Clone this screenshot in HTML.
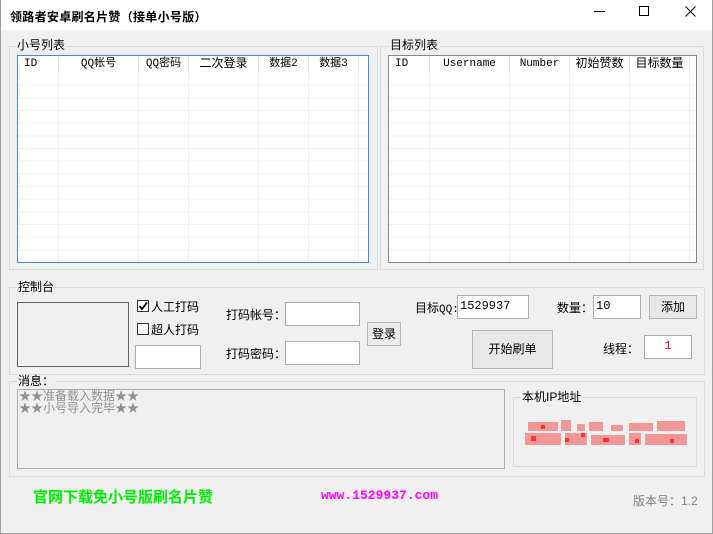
<!DOCTYPE html>
<html><head><meta charset="utf-8"><style>
*{margin:0;padding:0;box-sizing:border-box}
body{width:713px;height:534px;overflow:hidden;background:#f0f0f0;font-family:"Liberation Sans","Noto Sans CJK SC","WenQuanYi Zen Hei",sans-serif;font-size:12px;color:#000;position:relative}
.a{position:absolute;white-space:nowrap}
.win{left:0;top:0;width:713px;height:534px;border:1px solid #a0a0a0;border-top:none}
.title{left:0;top:0;width:713px;height:30px;background:#fff}
.grp{border:1px solid #dcdcdc}
.lbl{background:#f0f0f0;padding:0 1px;line-height:13px;font-size:12px}
.lv{background:#fff;border:1px solid #828790;overflow:hidden}
.hd{position:absolute;top:0;height:17px;border-right:1px solid #e5e5e5;font-family:"Liberation Mono","Noto Sans CJK SC",monospace;font-size:11px;line-height:17px;text-align:center;background:#fff}
.rows{position:absolute;left:0;top:17px;right:0;bottom:0;background:repeating-linear-gradient(to bottom,#fff 0,#fff 11.67px,#f0f0f0 11.67px,#f0f0f0 12.67px)}
.vl{position:absolute;top:0;bottom:0;width:1px;background:#f0f0f0}
.inp{background:#fff;border:1px solid #acacac;font-size:12px;line-height:20px;padding-left:2px;font-family:"Liberation Mono",monospace}
.btn{background:#e8e8e8;border:1px solid #b5b5b5;text-align:center}
.chk{width:12px;height:12px;border:1px solid #333;background:#fff}
</style></head><body>
<div class="a title"></div>
<div class="a win"></div>
<div class="a" style="left:10px;top:8px;font-size:12px;font-weight:bold;letter-spacing:0.3px">领路者安卓刷名片赞（接单小号版）</div>
<svg class="a" style="left:590px;top:0" width="123" height="30"><line x1="4" y1="11.5" x2="15" y2="11.5" stroke="#000"/><rect x="49.5" y="6.5" width="9" height="9" fill="none" stroke="#000"/><path d="M95.5 6.5 L105.5 16.5 M105.5 6.5 L95.5 16.5" stroke="#000"/></svg>

<!-- 小号列表 -->
<div class="a grp" style="left:9px;top:46px;width:369px;height:224px"></div>
<div class="a lbl" style="left:16px;top:39px">小号列表</div>
<div class="a lv" style="left:17px;top:55px;width:352px;height:208px;border-color:#3c8fe3">
 <div class="rows"></div>
 <div class="vl" style="left:40px"></div><div class="vl" style="left:120px"></div><div class="vl" style="left:170px"></div><div class="vl" style="left:240px"></div><div class="vl" style="left:290px"></div><div class="vl" style="left:340px"></div>
 <div class="hd" style="left:0;width:41px;text-align:left;padding-left:6px">ID</div>
 <div class="hd" style="left:41px;width:80px">QQ帐号</div>
 <div class="hd" style="left:121px;width:50px">QQ密码</div>
 <div class="hd" style="left:171px;width:70px;font-size:12px">二次登录</div>
 <div class="hd" style="left:241px;width:50px">数据2</div>
 <div class="hd" style="left:291px;width:50px">数据3</div>
 <div class="hd" style="left:341px;width:20px"></div>
</div>

<!-- 目标列表 -->
<div class="a grp" style="left:380px;top:46px;width:324px;height:224px"></div>
<div class="a lbl" style="left:389px;top:39px">目标列表</div>
<div class="a lv" style="left:388px;top:55px;width:309px;height:208px">
 <div class="rows"></div>
 <div class="vl" style="left:40px"></div><div class="vl" style="left:120px"></div><div class="vl" style="left:180px"></div><div class="vl" style="left:240px"></div><div class="vl" style="left:300px"></div>
 <div class="hd" style="left:0;width:41px;text-align:left;padding-left:6px">ID</div>
 <div class="hd" style="left:41px;width:80px">Username</div>
 <div class="hd" style="left:121px;width:60px">Number</div>
 <div class="hd" style="left:181px;width:60px;font-size:12px">初始赞数</div>
 <div class="hd" style="left:241px;width:60px;font-size:12px">目标数量</div>
</div>

<!-- 控制台 -->
<div class="a grp" style="left:9px;top:287px;width:696px;height:88px"></div>
<div class="a lbl" style="left:17px;top:281px">控制台</div>
<div class="a" style="left:17px;top:302px;width:112px;height:65px;border:1px solid #646464;background:#f0f0f0"></div>
<div class="a chk" style="left:137px;top:300px"></div>
<svg class="a" style="left:137px;top:300px" width="12" height="12"><path d="M2.5 6 L5 9 L10 2.5" stroke="#000" stroke-width="1.8" fill="none"/></svg>
<div class="a" style="left:151px;top:298px">人工打码</div>
<div class="a chk" style="left:137px;top:323px"></div>
<div class="a" style="left:151px;top:321px">超人打码</div>
<div class="a inp" style="left:135px;top:345px;width:66px;height:24px"></div>
<div class="a" style="left:226px;top:306px">打码帐号：</div>
<div class="a inp" style="left:285px;top:302px;width:75px;height:24px"></div>
<div class="a" style="left:226px;top:345px">打码密码：</div>
<div class="a inp" style="left:285px;top:341px;width:75px;height:24px"></div>
<div class="a btn" style="left:367px;top:322px;width:34px;height:24px;line-height:22px;background:#eaeaea">登录</div>

<div class="a" style="left:415px;top:299px">目标<span style="font-family:'Liberation Mono',monospace;font-size:11px">QQ:</span></div>
<div class="a inp" style="left:457px;top:295px;width:72px;height:24px">1529937</div>
<div class="a" style="left:557px;top:299px">数量：</div>
<div class="a inp" style="left:593px;top:295px;width:48px;height:24px">10</div>
<div class="a btn" style="left:649px;top:295px;width:48px;height:24px;line-height:22px">添加</div>
<div class="a btn" style="left:472px;top:330px;width:81px;height:39px;line-height:37px">开始刷单</div>
<div class="a" style="left:603px;top:340px">线程：</div>
<div class="a inp" style="left:644px;top:335px;width:48px;height:24px;color:#f00;text-align:center;padding:0">1</div>

<!-- 消息 -->
<div class="a grp" style="left:9px;top:381px;width:696px;height:96px"></div>
<div class="a lbl" style="left:17px;top:375px">消息：</div>
<div class="a" style="left:17px;top:389px;width:488px;height:80px;border:1px solid #acacac;background:#f0f0f0"></div>
<div class="a" style="left:19px;top:390px;color:#909090;font-size:12px;line-height:12px">★★准备载入数据★★<br>★★小号导入完毕★★</div>
<div class="a grp" style="left:513px;top:397px;width:184px;height:70px"></div>
<div class="a lbl" style="left:521px;top:391px">本机IP地址</div>
<svg class="a" style="left:525px;top:419px" width="166" height="28">
<g fill="#f27a7a" opacity="0.75">
<rect x="3" y="3" width="30" height="9"/><rect x="36" y="1" width="10" height="11"/><rect x="52" y="5" width="8" height="7"/><rect x="64" y="3" width="14" height="9"/><rect x="86" y="6" width="12" height="6"/><rect x="104" y="4" width="24" height="8"/><rect x="132" y="2" width="28" height="10"/>
<rect x="0" y="14" width="36" height="12"/><rect x="40" y="14" width="22" height="12"/><rect x="66" y="16" width="34" height="10"/><rect x="104" y="14" width="12" height="12"/><rect x="120" y="15" width="42" height="11"/>
</g>
<g fill="#ff3030"><rect x="6" y="17" width="5" height="5"/><rect x="40" y="19" width="4" height="4"/><rect x="78" y="19" width="6" height="4"/><rect x="110" y="20" width="4" height="4"/><rect x="145" y="20" width="4" height="4"/><rect x="16" y="6" width="4" height="4"/><rect x="56" y="14" width="4" height="4"/></g>
</svg>

<!-- footer -->
<div class="a" style="left:33px;top:486px;color:#00ee00;font-size:15px;font-weight:bold">官网下载免小号版刷名片赞</div>
<div class="a" style="left:321px;top:488px;color:#ff00ff;font-size:13px;font-weight:bold;font-family:'Liberation Mono',monospace">www.1529937.com</div>
<div class="a" style="left:633px;top:492px;color:#808080;font-size:12px">版本号：1.2</div>
</body></html>
